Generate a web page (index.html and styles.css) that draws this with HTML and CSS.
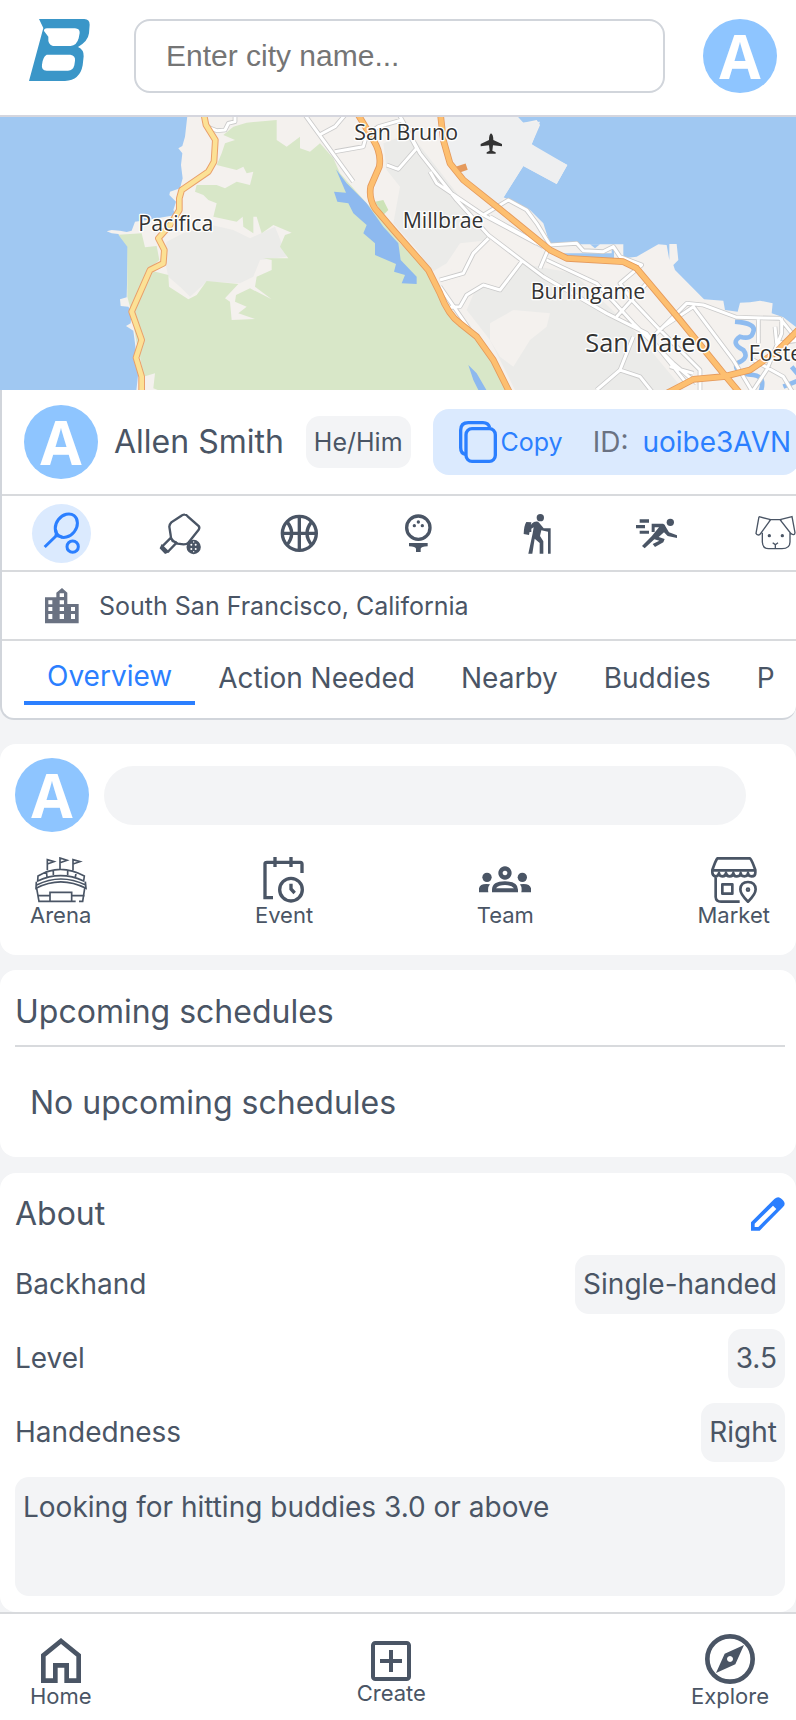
FILE: index.html
```html
<!DOCTYPE html>
<html lang="en">
<head>
<meta charset="utf-8">
<meta name="viewport" content="width=device-width, initial-scale=1">
<title>Allen Smith</title>
<link rel="stylesheet" href="styles.css">
</head>
<body>
<header class="topbar">
  <a class="logo" href="#" aria-label="Home page">
    <svg viewBox="0 0 183 186" width="61" height="62"><path fill="#3a96c8" fill-rule="evenodd" d="M30 0H166Q182 1 182 17L180 43Q177 67 147 84Q165 92 164 112L161 139Q153 184 108 186H0L43 27ZM45 36Q44 29 54 28H138Q153 29 152 42L149 58Q143 80 125 81H72Q56 77 58 58V53ZM53 107H124Q140 110 138 125L136 139Q132 155 117 155H53Q36 153 39 137Q41 114 53 107Z"/></svg>
  </a>
  <input class="search" type="text" placeholder="Enter city name..." aria-label="City name">
  <span class="avatar">A</span>
</header>

<section class="map" aria-label="Map">
<svg viewBox="300 0 2388 819" preserveAspectRatio="xMaxYMid slice">
  <g transform="translate(600,-21)">
    <path fill="#f4f1ee" d="M264 0L255 80L247 108L235 115L247 130L243 165L248 205L240 235L210 245L208 255L228 275L220 300L228 315L140 330L105 335L95 362L80 366L60 362L35 360L20 364L35 370L55 372L84 408L80 562L60 568L62 588L85 590L95 605L92 640L78 648L100 662L105 700L108 730L117 770L108 850H2100V660L2050 622L2015 610L2018 580L1980 572L1950 577L1920 578L1913 605L1875 600L1870 572L1812 568L1725 480L1720 465L1735 450L1730 402H1708V450L1700 405L1675 403L1610 440L1570 445V403H1350L1330 340L1290 300L1225 268L1210 262L1270 168L1370 222L1402 165L1325 125L1295 103L1320 45L1310 30L1270 38L1235 20V0Z"/>
    <path fill="#eeeff0" d="M1020 0H1235L1270 38L1320 35L1295 103L1402 165L1370 222L1270 168L1210 264L1195 285L1090 205L1040 140Z"/>
    <path fill="#ebebe9" d="M200 395L250 370L335 345L400 360L450 385L525 350L545 400L560 440L480 450L460 500L420 520L320 515L270 560L240 530L205 500L190 430ZM850 100L930 70L1110 300L1170 390L1080 400L1040 460L990 490L960 430L880 340L900 230L860 180ZM1260 460L1420 490L1600 660L1760 850H1250L1170 690L1100 600L1130 530L1200 540Z"/>
    <path fill="#f4f1ee" d="M1170 640L1240 600L1350 610L1340 650L1290 690L1240 770L1200 740L1170 690ZM1050 470L1150 420L1180 460L1080 520Z"/>
    <path fill="#d8e7c8" d="M55 374L125 370L135 412L170 408L178 450L145 480L205 495L207 530L265 568L290 555L320 513L415 522L375 565L390 575L395 630L465 627L415 610L440 590L405 575L408 555L450 535L515 568L465 530L470 500L515 480L515 450L490 445L565 445L540 410L555 375L575 368L520 345L485 370L470 320L460 320V370L430 350L428 320L410 335L340 320L350 280L325 270L310 255L285 245L290 225L350 225L375 235L410 215L450 225L460 185L440 190L430 170L410 180L350 165L365 130L375 100L405 90L370 75L400 50L440 38L530 30L530 90L560 110L600 80V115L630 125L660 100L700 145L720 190L800 280L850 330L900 400L960 460L1020 545L1080 640L1130 685L1190 760L1230 850H200L160 835L165 790L130 800L120 740L110 700L95 610L82 560V410Z"/>
    <path fill="#cde3b7" d="M825 275L850 270L865 300L850 315Z"/>
    <path fill="#8db9ef" d="M708 178L740 220L800 280L850 350L895 400L902 450L950 500V522L905 520L915 495L882 485L888 462L825 435V400L790 370L800 345L760 310L745 280L712 275L702 245L738 248ZM1105 765L1130 790L1165 850H1140L1120 810Z"/>
    <path fill="#a0c8f2" d="M1390 430H1535V415H1542V445L1400 440ZM1470 403H1500L1485 415Z"/>
    <path fill="none" stroke="#8fbcf0" stroke-width="14" d="M1905 635Q1970 640 1960 665Q1955 690 1920 680Q1890 700 1930 720Q1950 745 1910 760Q1900 790 1960 795Q2000 800 1980 850M2075 770L2100 800M2050 830L2100 810"/>

    <g fill="none" stroke-linejoin="round">
      <path stroke="#cacaca" stroke-width="14" d="M320 50L350 62L375 60L385 40L405 35V20M615 15L760 215M658 75L705 50L735 15M705 125L790 110L800 75L835 50L905 30L950 115L895 178L860 165M890 0L960 130L1070 270L1165 375L1270 455L1330 500L1520 610L1640 670L1760 820M990 185L1010 220L1150 315L1310 400M1150 315L1225 270L1280 300L1310 340L1350 405L1320 475M1170 320L1330 410M1165 385L1120 430L1090 490L1020 510M1265 455L1200 540L1150 525L1100 555L1080 590L1050 592M1020 530L1110 660M1340 450L1490 520L1600 640L1720 760L1790 820M1350 405L1430 400L1450 422L1510 425L1540 410L1560 440L1625 465L1560 520L1600 575L1680 660L1800 780V850M1660 680L1760 580L1810 585L1910 622L2040 625L2100 700M1690 650L1780 590L1900 750L1960 850M1640 520L1550 620M1600 680L1560 780L1490 840M1560 780L1620 800L1660 850M1975 625V700M2045 625V670L2000 780L1960 840M2025 650L2030 700L2100 690M1960 750L2050 800L2080 850M1710 770L1780 790"/>
      <path stroke="#fff" stroke-width="9" d="M320 50L350 62L375 60L385 40L405 35V20M615 15L760 215M658 75L705 50L735 15M705 125L790 110L800 75L835 50L905 30L950 115L895 178L860 165M890 0L960 130L1070 270L1165 375L1270 455L1330 500L1520 610L1640 670L1760 820M990 185L1010 220L1150 315L1310 400M1150 315L1225 270L1280 300L1310 340L1350 405L1320 475M1170 320L1330 410M1165 385L1120 430L1090 490L1020 510M1265 455L1200 540L1150 525L1100 555L1080 590L1050 592M1020 530L1110 660M1340 450L1490 520L1600 640L1720 760L1790 820M1350 405L1430 400L1450 422L1510 425L1540 410L1560 440L1625 465L1560 520L1600 575L1680 660L1800 780V850M1660 680L1760 580L1810 585L1910 622L2040 625L2100 700M1690 650L1780 590L1900 750L1960 850M1640 520L1550 620M1600 680L1560 780L1490 840M1560 780L1620 800L1660 850M1975 625V700M2045 625V670L2000 780L1960 840M2025 650L2030 700L2100 690M1960 750L2050 800L2080 850M1710 770L1780 790"/>
      <path stroke="#e9a06b" stroke-width="20" d="M312 15L318 45L346 90L342 155L325 185L245 240L238 265V300L210 345L175 385L193 420L190 460L150 480L95 605L125 690L108 743L125 800V850"/>
      <path stroke="#fce195" stroke-width="14" d="M312 15L318 45L346 90L342 155L325 185L245 240L238 265V300L210 345L175 385L193 420L190 460L150 480L95 605L125 690L108 743L125 800V850"/>
      <path stroke="#e59a5c" stroke-width="20" d="M775 15L820 90Q845 130 838 170L812 230Q806 265 825 295L880 360L985 480L1020 550Q1045 615 1080 640L1130 680L1180 750L1230 850M1020 0L1030 90L1050 160L1090 210L1190 290L1350 420L1400 445L1570 455L1610 475L1740 630L1870 790L1920 850M1700 850L1780 808L1870 800L1950 780L2030 725L2100 655M1100 170L1070 180"/>
      <path stroke="#fdbf70" stroke-width="15" d="M775 15L820 90Q845 130 838 170L812 230Q806 265 825 295L880 360L985 480L1020 550Q1045 615 1080 640L1130 680L1180 750L1230 850M1020 0L1030 90L1050 160L1090 210L1190 290L1350 420L1400 445L1570 455L1610 475L1740 630L1870 790L1920 850M1700 850L1780 808L1870 800L1950 780L2030 725L2100 655"/>
    </g>
    <path fill="#333" d="M1173 70Q1180 74 1180 90L1206 102V109L1179 106L1177 122L1187 127V131H1160V127L1169 122L1167 106L1142 109V102L1167 90Q1167 74 1173 70Z"/>
    <g class="map-labels">
      <text x="115" y="363">Pacifica</text>
      <text x="763" y="90">San Bruno</text>
      <text x="908" y="353">Millbrae</text>
      <text x="1292" y="568">Burlingame</text>
      <text class="map-city" x="1456" y="727">San Mateo</text>
      <text x="1946" y="752">Foster City</text>
    </g>
  </g>
</svg>
</section>

<main>
<section class="profile">
  <div class="identity">
    <span class="avatar">A</span>
    <h1 class="name">Allen Smith</h1>
    <span class="pronoun">He/Him</span>
    <div class="id-pill">
      <button class="copy" type="button">
        <svg width="38" height="42" viewBox="0 0 114 126" fill="none" stroke="currentColor" stroke-width="10"><rect x="21" y="23" width="88" height="98" rx="18"/><path d="M21 100Q5 98 5 80V28Q5 5 28 5H72Q88 5 92 20"/></svg>
        <span>Copy</span>
      </button>
      <span class="id-label">ID:</span>
      <span class="id-value">uoibe3AVN</span>
    </div>
  </div>

  <nav class="sports" aria-label="Sports">
    <button class="sport active" type="button" aria-label="Tennis"><svg viewBox="0 0 177 177" fill="none" stroke="currentColor" stroke-width="9"><ellipse cx="103" cy="65" rx="30" ry="38" transform="rotate(38 103 65)"/><path d="M70 76Q76 90 70 97Q78 92 93 101M72 96L38 129"/><circle cx="122" cy="128" r="17"/></svg></button>
    <button class="sport" type="button" aria-label="Pickleball"><svg viewBox="-28 -28 177 177" fill="none" stroke="currentColor" stroke-width="7"><path d="M73 4Q78 4 82 9L115 38Q119 44 115 49L84 88Q80 93 70 93L52 91Q30 80 31 66L27 40Q28 32 33 27L62 8Q68 3 73 4ZM32 73L5 100M49 88L22 116M32 73L37 83L49 88"/><path fill="currentColor" d="M5 98L22 115L15 118L2 104Z"/><circle cx="100" cy="101" r="18" fill="currentColor"/><g fill="#fff" stroke="none"><circle cx="93" cy="94" r="3"/><circle cx="106" cy="94" r="3"/><circle cx="93" cy="107" r="3"/><circle cx="106" cy="107" r="3"/><circle cx="100" cy="86" r="2"/><circle cx="100" cy="115" r="2"/></g></svg></button>
    <button class="sport" type="button" aria-label="Basketball"><svg viewBox="-88 -88 177 177" fill="none" stroke="currentColor" stroke-width="10"><circle r="51"/><path d="M0-51V51M-51 0H51M-38-36Q-8 0-38 36M38-36Q8 0 38 36"/></svg></button>
    <button class="sport" type="button" aria-label="Golf"><svg viewBox="-88 -88 177 177" fill="none" stroke="currentColor" stroke-width="10"><circle cy="-17" r="35"/><g fill="currentColor" stroke="none"><circle cy="-34" r="5"/><circle cx="-12" cy="-23" r="5"/><circle cx="12" cy="-23" r="5"/><path d="M-28 29H28V39Q8 40 7 46V56H-7V46Q-8 40-28 39Z"/></g></svg></button>
    <button class="sport" type="button" aria-label="Hiking"><svg viewBox="-88 -88 177 177" fill="currentColor"><circle cx="9" cy="-47" r="11"/><path d="M-33-34L-18-33L-25 5L-41 2Q-40-24-33-34ZM-10-34Q1-38 6-31L19-15H32V-15H40V61H32V-5L12-9L8 8L18 24V61H7V29L-8 16L-15 61H-27L-14 0L-11-18L-18-14V-4H-24Q-24-28-10-34Z"/></svg></button>
    <button class="sport" type="button" aria-label="Running"><svg viewBox="-88 -88 177 177" fill="currentColor"><circle cx="42" cy="-33" r="11"/><path d="M-50-42H-22V-32H-50ZM-61-25H-34V-15H-61ZM-50-8H-22V1H-50ZM-14-29H20Q26-28 28-20L38-3L62 6V14L34 8L23-3L7 11L25 17L21 27L-4 41L-11 32L9 22L-6 18L-35 45L-43 38L-14 9L8-18H-5V-4H-14Z"/></svg></button>
    <button class="sport" type="button" aria-label="Dog walking"><svg viewBox="-88 -88 177 177" fill="none" stroke="currentColor" stroke-width="4"><path d="M-39-2V26Q-38 46-20 46H20Q44 46 44 26V-2M-49-50L-58 0Q-53 8-46 3L-14-41L-49-50M-20-41H20M50-50L14-41L47 1Q58 8 59-2Z"/><path d="M0 44V34L-8 28M0 34L8 28"/><g fill="currentColor" stroke="none"><circle cx="-18" cy="7" r="5"/><circle cx="21" cy="7" r="5"/></g></svg></button>
  </nav>

  <div class="place">
    <svg width="34" height="36" viewBox="0 0 102 108" fill="currentColor"><path fill-rule="evenodd" d="M0 28H34V14L51 0L67 14V48H101V106H0ZM10 37H22V49H10ZM10 57H22V69H10ZM10 78H22V93H10ZM44 16H57V27H44ZM44 37H57V49H44ZM44 57H57V69H44ZM44 78H57V93H44ZM78 57H90V69H78ZM78 78H90V93H78Z"/></svg>
    <span>South San Francisco, California</span>
  </div>

  <nav class="tabs" aria-label="Profile sections">
    <a class="tab active" href="#">Overview</a>
    <a class="tab" href="#">Action Needed</a>
    <a class="tab" href="#">Nearby</a>
    <a class="tab" href="#">Buddies</a>
    <a class="tab" href="#">P</a>
  </nav>
</section>

<section class="card compose">
  <div class="compose-row">
    <span class="avatar">A</span>
    <button class="compose-box" type="button" aria-label="Write a post"></button>
  </div>
  <div class="actions">
    <button class="stack" type="button">
      <svg width="52" height="46" viewBox="0 0 156 138" fill="none" stroke="currentColor" stroke-width="5"><path d="M37 40V8L57 14L37 21M75 36V3L96 10L75 17M114 40V8L135 14L114 21M9 57Q75 17 148 57L146 72Q77 40 8 72ZM34 42L36 60M55 38V54M98 38V54M124 44L121 60M4 74L3 94Q77 55 153 94L151 74M5 84Q77 48 152 84M5 94L12 133H122M132 133H143L149 94M8 116H45M110 116H149M45 133V106H110V133"/></svg>
      <span>Arena</span>
    </button>
    <button class="stack" type="button">
      <svg width="42" height="46" viewBox="0 0 126 138" fill="none" stroke="currentColor" stroke-width="10"><path d="M30 122H6V20Q6 16 12 16H112Q117 16 117 22V48M36 0V30M84 0V30M84 80V96L95 108"/><circle cx="84" cy="98" r="34"/></svg>
      <span>Event</span>
    </button>
    <button class="stack" type="button">
      <svg width="54" height="46" viewBox="0 0 162 138" fill="currentColor"><path fill-rule="evenodd" d="M81 28A20 20 0 1 1 80.900 28ZM81 41A7 7 0 1 0 81.100 41ZM42 106V98Q42 73 81 73Q120 73 120 98V106ZM54 94H108Q100 84 81 84Q62 84 54 94Z"/><circle cx="27" cy="61" r="14"/><circle cx="133" cy="61" r="14"/><path d="M3 106V94Q6 78 36 82Q28 91 31 106ZM159 106V94Q155 78 126 82Q133 91 130 106Z"/></svg>
      <span>Team</span>
    </button>
    <button class="stack" type="button">
      <svg width="46" height="46" viewBox="0 0 138 138" fill="none" stroke="currentColor" stroke-width="8" stroke-linejoin="round"><path d="M19 4H117Q123 10 133 39V47Q133 58 122 58Q111 58 111 48Q111 58 100 58Q89 58 89 48Q89 58 78 58H76Q68 58 67 48Q66 58 56 58Q46 58 45 48Q44 58 34 58Q24 58 24 48Q22 58 13 58Q4 56 4 46V39Q14 10 19 4ZM4 40H133M14 56V120Q15 134 30 134H86"/><rect x="34" y="82" width="30" height="28"/><path d="M111 134Q88 112 88 97Q89 75 111 75Q133 75 134 97Q134 112 111 134Z"/><circle cx="111" cy="98" r="3"/></svg>
      <span>Market</span>
    </button>
  </div>
</section>

<section class="card schedules">
  <h2>Upcoming schedules</h2>
  <p>No upcoming schedules</p>
</section>

<section class="card about">
  <div class="about-head">
    <h2>About</h2>
    <button class="edit" type="button" aria-label="Edit about"><svg width="34" height="34" viewBox="0 0 102 102"><path fill="currentColor" fill-rule="evenodd" d="M0 76L70 6Q82-5 92 6L96 10Q106 21 96 30L26 101H0ZM11 80V90H22L76 36L66 26Z"/></svg></button>
  </div>
  <dl class="facts">
    <div class="fact"><dt>Backhand</dt><dd>Single-handed</dd></div>
    <div class="fact"><dt>Level</dt><dd>3.5</dd></div>
    <div class="fact"><dt>Handedness</dt><dd>Right</dd></div>
  </dl>
  <p class="bio">Looking for hitting buddies 3.0 or above</p>
</section>
</main>

<nav class="bottombar" aria-label="Main">
  <a class="stack" href="#">
    <svg width="40" height="46" viewBox="0 0 120 138" fill="none" stroke="currentColor" stroke-width="14"><path d="M60 9L113 52V128H77V82H43V128H7V52Z"/></svg>
    <span>Home</span>
  </a>
  <a class="stack raised" href="#">
    <svg width="40" height="40" viewBox="0 0 120 120" fill="none" stroke="currentColor" stroke-width="12"><rect x="6" y="6" width="108" height="108" rx="7"/><path d="M60 27V93M27 60H93"/></svg>
    <span>Create</span>
  </a>
  <a class="stack" href="#">
    <svg width="50" height="50" viewBox="0 0 150 150"><circle cx="75" cy="75" r="68" fill="none" stroke="currentColor" stroke-width="14"/><path fill="currentColor" fill-rule="evenodd" d="M117 33L91 91L33 117L59 59ZM75 66A9 9 0 1 0 75.100 66Z"/></svg>
    <span>Explore</span>
  </a>
</nav>
</body>
</html>
```
FILE: styles.css
```css
* { box-sizing: border-box; }

body {
  margin: 0;
  background: #f3f4f6;
  color: #4a5565;
  font-family: Inter, "Liberation Sans", sans-serif;
  font-size: 28px;
  line-height: 36px;
  overflow-x: hidden;
}

h1, h2, p, dl, dd { margin: 0; font-weight: 400; }
h1, h2 { font-size: 32px; }
svg { display: block; flex: none; }
a { color: inherit; text-decoration: none; }
button {
  border: 0;
  padding: 0;
  background: none;
  color: inherit;
  font: inherit;
  cursor: pointer;
}

.topbar {
  display: flex;
  align-items: center;
  justify-content: space-between;
  height: 117px;
  padding: 0 19px 4px 29px;
  background: #fff;
  border-bottom: 2px solid #d5d6de;
}
.logo { align-self: flex-start; padding-top: 19px; }
.search {
  flex: 1;
  min-width: 0;
  height: 74px;
  margin: 0 38px 0 44px;
  padding: 0 30px;
  border: 2px solid #d1d5db;
  border-radius: 16px;
  background: #fff;
  font: 30px "Liberation Sans", sans-serif;
}
.search::placeholder { color: #757575; opacity: 1; }

.avatar {
  display: grid;
  place-items: center;
  flex: none;
  width: 74px;
  height: 74px;
  border-radius: 50%;
  background: #8ec5ff;
  color: #fff;
  font: 700 60px/74px "Open Sans", sans-serif;
}

.map { height: 273px; overflow: hidden; background: #a0c8f2; }
.map svg { width: 100%; height: 100%; }
.map-labels {
  fill: #333;
  stroke: #fff;
  stroke-width: 8px;
  stroke-linejoin: round;
  paint-order: stroke;
  font-family: "Open Sans", sans-serif;
  font-size: 64px;
}
.map-city { font-size: 76px; }

.profile {
  overflow: hidden;
  background: #fff;
  border: 2px solid #d1d5db;
  border-top: 0;
  border-right-width: 0;
  border-radius: 0 0 14px 14px;
}
.identity {
  display: flex;
  align-items: center;
  height: 106px;
  padding-left: 22px;
  border-bottom: 2px solid #d8dadd;
  white-space: nowrap;
}
.name { margin: 0 22px 0 16px; }
.pronoun {
  padding: 8px;
  border-radius: 14px;
  background: #f3f4f6;
  font-size: 25px;
}
.id-pill {
  display: flex;
  flex: none;
  align-items: center;
  height: 66px;
  margin-left: 22px;
  padding: 0 8px 0 26px;
  border-radius: 16px;
  background: #dbeafe;
  color: #2b7fff;
}
.copy { display: flex; align-items: center; gap: 4px; font-size: 25px; }
.id-label { margin: 0 14px 0 30px; color: #6a7282; }

.sports {
  display: flex;
  align-items: center;
  gap: 60px;
  height: 76px;
  padding: 0 30px;
  border-bottom: 2px solid #d8dadd;
  overflow: hidden;
}
.sport { flex: none; width: 59px; height: 59px; border-radius: 50%; }
.sport svg { width: 59px; height: 59px; }
.sport.active { background: #dbeafe; color: #2b7fff; }

.place {
  display: flex;
  align-items: center;
  gap: 20px;
  height: 69px;
  padding-left: 43px;
  border-bottom: 2px solid #d8dadd;
  font-size: 25px;
}
.place svg { color: #6a7282; }

.tabs {
  display: flex;
  height: 77px;
  padding: 0 22px;
  overflow: hidden;
  white-space: nowrap;
}
.tab { flex: none; height: 64px; padding: 0 23px; line-height: 74px; }
.tab.active {
  border-bottom: 4px solid #2b7fff;
  color: #2b7fff;
  line-height: 70px;
}

.card {
  padding: 15px 11px 15px 15px;
  border-radius: 16px;
  background: #fff;
}
.compose { height: 211px; margin-top: 24px; padding-top: 14px; }
.compose-row { display: flex; align-items: center; gap: 15px; padding-right: 39px; }
.compose-box { flex: 1; height: 59px; border-radius: 30px; background: #f3f4f6; }
.actions {
  display: flex;
  justify-content: space-between;
  padding: 25px 15px 0;
}
.stack {
  display: flex;
  flex-direction: column;
  align-items: center;
  font-size: 22px;
  line-height: 24px;
}

.schedules { margin-top: 15px; padding-top: 24px; padding-bottom: 36px; }
.schedules h2 { padding-bottom: 15px; border-bottom: 2px solid #d8dadd; }
.schedules p { padding: 38px 15px 0; font-size: 32px; }

.about { margin-top: 16px; padding-bottom: 16px; }
.about-head {
  display: flex;
  align-items: center;
  justify-content: space-between;
  padding-top: 8px;
}
.edit { color: #2b7fff; }
.facts { display: grid; gap: 15px; padding: 23px 0 15px; }
.fact { display: flex; align-items: center; justify-content: space-between; line-height: 35px; }
.fact dd {
  padding: 12px 8px;
  border-radius: 14px;
  background: #f3f4f6;
}
.bio {
  min-height: 119px;
  padding: 12px 8px;
  border-radius: 14px;
  background: #f3f4f6;
}

.bottombar {
  display: flex;
  align-items: flex-end;
  justify-content: space-between;
  height: 108px;
  padding: 0 27px 12px 30px;
  background: #fff;
  border-top: 2px solid #d8dadd;
}
.bottombar .raised { padding-bottom: 3px; }
```
